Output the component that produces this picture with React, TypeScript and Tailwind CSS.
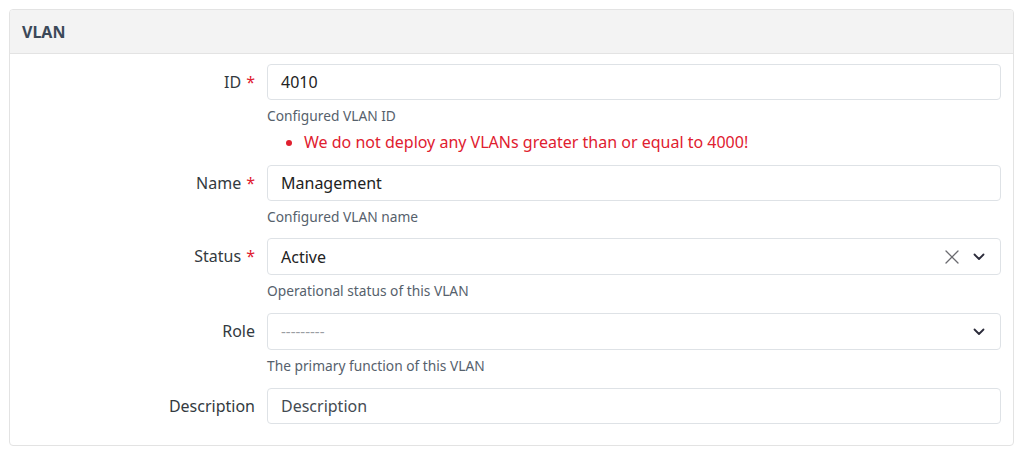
import React from "react";

const font = { fontFamily: '"Noto Sans", "Open Sans", sans-serif' };

const Label: React.FC<{ text: string; required?: boolean }> = ({ text, required }) => (
  <div className="w-[257px] shrink-0 pr-[12px] h-[36px] flex items-center justify-end text-[16px] text-[#333a40]">
    {text}
    {required && <span className="ml-[5px] text-[#e0202f]">*</span>}
  </div>
);

const Help: React.FC<{ text: string }> = ({ text }) => (
  <div className="mt-[6px] text-[13.75px] leading-[20px] text-[#56616c]">{text}</div>
);

const Chevron = () => (
  <svg width="12" height="8" viewBox="0 0 12 8" fill="none">
    <path d="M1.5 1.5 6 6l4.5-4.5" stroke="#2b2b3a" strokeWidth="1.8" strokeLinecap="round" strokeLinejoin="round" />
  </svg>
);

const Cross = () => (
  <svg width="14" height="14" viewBox="0 0 14 14" fill="none">
    <path d="M1 1l12 12M13 1 1 13" stroke="#6b6b70" strokeWidth="1.3" strokeLinecap="round" />
  </svg>
);

export default function App() {
  return (
    <div className="bg-white w-[1024px] h-[455px] p-[9px] pr-[10px]" style={font}>
      <div className="border border-[#e3e3e3] rounded-[4px] overflow-hidden">
        <div className="h-[44px] bg-[#f3f3f3] border-b border-[#e3e3e3] px-[12px] flex items-center">
          <span className="text-[16px] font-bold text-[#3b4858]">VLAN</span>
        </div>
        <div className="pt-[10px] pb-[21px] pr-[12px]">
          {/* ID */}
          <div className="flex mb-[13px]">
            <Label text="ID" required />
            <div className="flex-1">
              <div className="h-[36px] border border-[#dee2e6] rounded-[4px] flex items-center px-[13px] text-[16px] text-[#222]">
                4010
              </div>
              <Help text="Configured VLAN ID" />
              <ul className="list-disc pl-[37px] text-[16px] leading-[20px] mt-[6px] text-[#e0202f] marker:text-[#e0202f]">
                <li>We do not deploy any VLANs greater than or equal to 4000!</li>
              </ul>
            </div>
          </div>
          {/* Name */}
          <div className="flex mb-[11px]">
            <Label text="Name" required />
            <div className="flex-1">
              <div className="h-[36px] border border-[#dee2e6] rounded-[4px] flex items-center px-[13px] text-[16px] text-[#222]">
                Management
              </div>
              <Help text="Configured VLAN name" />
            </div>
          </div>
          {/* Status */}
          <div className="flex mb-[12px]">
            <Label text="Status" required />
            <div className="flex-1">
              <div className="h-[37px] border border-[#dee2e6] rounded-[4px] flex items-center pl-[13px] pr-[15px] text-[16px] text-[#222]">
                <span className="flex-1">Active</span>
                <Cross />
                <span className="ml-[14px]">
                  <Chevron />
                </span>
              </div>
              <Help text="Operational status of this VLAN" />
            </div>
          </div>
          {/* Role */}
          <div className="flex mb-[12px]">
            <Label text="Role" />
            <div className="flex-1">
              <div className="h-[37px] border border-[#dee2e6] rounded-[4px] flex items-center pl-[13px] pr-[15px] text-[16px]">
                <span className="flex-1 text-[#9a9ea3] text-[15px]">---------</span>
                <Chevron />
              </div>
              <Help text="The primary function of this VLAN" />
            </div>
          </div>
          {/* Description */}
          <div className="flex">
            <Label text="Description" />
            <div className="flex-1">
              <div className="h-[36px] border border-[#dee2e6] rounded-[4px] flex items-center px-[13px] text-[16px] text-[#444b52]">
                Description
              </div>
            </div>
          </div>
        </div>
      </div>
    </div>
  );
}
